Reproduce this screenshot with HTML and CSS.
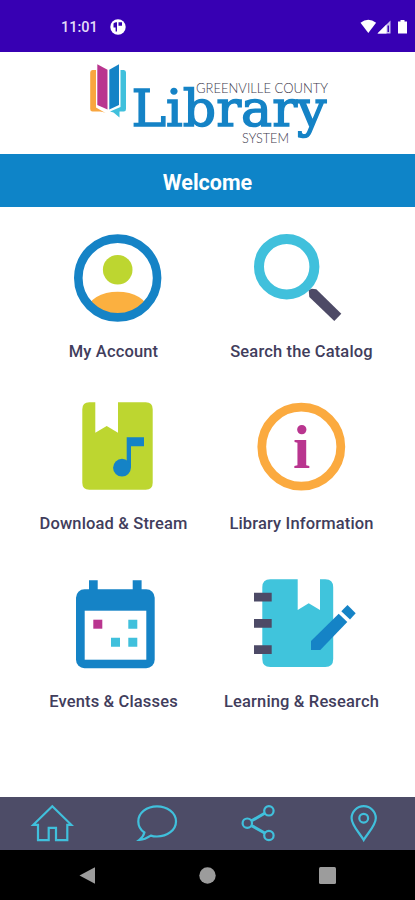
FILE: index.html
```html
<!DOCTYPE html>
<html lang="en">
<head>
  <meta charset="UTF-8">
  <title>Greenville County Library System</title>
  <link rel="stylesheet" href="styles.css">
</head>
<body>
  <div class="status-bar">
    <span class="time">11:01</span>
    <svg class="app-dot" width="16" height="16" viewBox="0 0 16 16">
      <circle cx="8" cy="8" r="7.7" fill="#fff"/>
      <path d="M3.500 4.500Q5 3 7 3.200V12.500H5.600V8.500H3.500zM8.500 3.300h3.500v3.500h-3.500z" fill="#3700b3"/>
    </svg>
    <svg class="signals" width="48" height="16" viewBox="0 0 48 16">
      <path d="M0.500 3.800Q8.300-2.200 16.100 3.800L8.300 14z" fill="#fff"/>
      <path d="M17.500 14.500L30.500 1.500V14.500z" fill="#c9bdf0"/>
      <path d="M17.500 14.500L26.500 5.500V14.500z" fill="#fff"/>
      <path d="M27.500 6.500h1.500v6.500h-1.500z" fill="#3700b3"/>
      <path d="M38 2.500h2.500v-1.500h4v1.500h2.500v12h-9z" fill="#fff"/>
    </svg>
  </div>

  <header class="logo">
    <svg width="245" height="90" viewBox="0 0 245 90">
      <path d="M11 10H7.500Q5.200 10 5.200 12.500V49Q5.200 51.500 7.500 51.500H15Q18 51.500 20.500 53L11 47.500z" fill="#f9a63f"/>
      <path d="M12.300 4.300L22.500 9.800V49.500L12.300 45z" fill="#b9358f"/>
      <path d="M24.300 9.800L34 4.300V45L24.300 49.500z" fill="#1583c6"/>
      <path d="M35.500 10H38.800Q41 10 41 12.500V49Q41 51.500 38.800 51.500H34.500V57.500L28.500 52.500L25 51.500L35.500 47z" fill="#40c0dc"/>
      <text class="logo-name" x="46.500" y="66" textLength="195" lengthAdjust="spacingAndGlyphs">Library</text>
      <text class="logo-small" x="111" y="33" textLength="132" lengthAdjust="spacingAndGlyphs">GREENVILLE COUNTY</text>
      <text class="logo-small" x="157" y="82.500" textLength="47" lengthAdjust="spacingAndGlyphs">SYSTEM</text>
    </svg>
  </header>

  <h1>Welcome</h1>

  <main class="menu">
    <div class="item">
      <svg width="188" height="100" viewBox="0 0 188 100">
        <clipPath id="face"><circle cx="98.700" cy="50" r="36"/></clipPath>
        <circle cx="98.700" cy="41.700" r="14.800" fill="#bdd630"/>
        <ellipse cx="98.700" cy="82" rx="30" ry="18.300" fill="#fbb040" clip-path="url(#face)"/>
        <circle cx="98.700" cy="50" r="39.400" fill="none" stroke="#1583c6" stroke-width="8.600"/>
      </svg>
      <span class="label">My Account</span>
    </div>

    <div class="item">
      <svg width="188" height="100" viewBox="0 0 188 100">
        <path d="M101.700 62L104.700 60.700L109.300 61.300L134.300 85.700L127.300 93L102.300 69z" fill="#4d4a66"/>
        <circle cx="79.700" cy="38.700" r="27.700" fill="none" stroke="#40c0dc" stroke-width="10"/>
      </svg>
      <span class="label">Search the Catalog</span>
    </div>

    <div class="item">
      <svg width="188" height="100" viewBox="0 0 188 100">
        <path d="M70.300 2.200H76.300V32.700L87.700 26L99 32.700V2.200H126.700Q133.700 2.200 133.700 9.200V82.800Q133.700 89.800 126.700 89.800H70.300Q63.300 89.800 63.300 82.800V9.200Q63.300 2.200 70.300 2.200z" fill="#bdd630"/>
        <path d="M107.700 37.300H125V46.300H112V67.700H107.700z" fill="#1583c6"/>
        <circle cx="103" cy="67.700" r="8.900" fill="#1583c6"/>
      </svg>
      <span class="label">Download &amp; Stream</span>
    </div>

    <div class="item">
      <svg width="188" height="100" viewBox="0 0 188 100">
        <circle cx="94.300" cy="46.700" r="39.500" fill="none" stroke="#fbaa3f" stroke-width="8.800"/>
        <text class="info" x="94.500" y="68" text-anchor="middle">i</text>
      </svg>
      <span class="label">Library Information</span>
    </div>

    <div class="item">
      <svg width="188" height="100" viewBox="0 0 188 100">
        <path d="M70 2.300h8.700v12h-8.700zM113.700 2.300h8.900v12h-8.900z" fill="#1583c6"/>
        <rect x="57" y="11.300" width="78.700" height="79" rx="8.500" fill="#1583c6"/>
        <rect x="65.700" y="32.700" width="61.600" height="49" fill="#fff"/>
        <rect x="74.300" y="41.700" width="9" height="9" fill="#b9358f"/>
        <path d="M109.300 41.700h9v9h-9zM92 59.700h9v9h-9zM109.300 59.700h9v9h-9z" fill="#40c0dc"/>
      </svg>
      <span class="label">Events &amp; Classes</span>
    </div>

    <div class="item">
      <svg width="188" height="100" viewBox="0 0 188 100">
        <path d="M63.300 1.300H90.700V32L101.700 25.300L113 32V1.300H118.300Q126.200 1.300 126.200 9.300V81Q126.200 89 118.300 89H63.300Q55.300 89 55.300 81V9.300Q55.300 1.300 63.300 1.300z" fill="#40c4dc"/>
        <path d="M47 14.700h17.700v8.800h-17.700zM47 41h17.700v8.800h-17.700zM47 67.300h17.700v8.800h-17.700z" fill="#4d4a66"/>
        <path d="M104 63L131.700 35.700L140.300 44L113.300 72H104z" fill="#1583c6"/>
        <path d="M134.300 33.300L140.500 27L148.700 35.300L143 41.500z" fill="#1583c6"/>
      </svg>
      <span class="label">Learning &amp; Research</span>
    </div>
  </main>

  <nav class="tabs">
    <svg width="44" height="40" viewBox="0 0 44 40">
      <path d="M22.300 2.300L41.300 20.800H37.300V36.200H26V23.800H18.700V36.200H8V20.800H3.300z"/>
    </svg>
    <svg width="44" height="40" viewBox="0 0 44 40">
      <path d="M10.400 28.500C6.500 25.800 4.300 21.800 4.300 17.400C4.300 8.900 12.700 2.300 23 2.300S42 8.900 42 17.400S33.300 32.500 23 32.500Q19.500 32.500 16.800 31.600Q11 35.500 5.400 35.800Q9.500 32.500 10.400 28.500z"/>
    </svg>
    <svg width="44" height="40" viewBox="0 0 44 40">
      <path class="thick" d="M14.600 16.800L27.700 9.300M14.600 21.600L27.700 29"/>
      <circle cx="31.900" cy="6.800" r="4.700"/>
      <circle cx="10.300" cy="19.200" r="4.700"/>
      <circle cx="31.900" cy="31.500" r="4.700"/>
    </svg>
    <svg width="44" height="40" viewBox="0 0 44 40">
      <path d="M22.700 36C19 29.500 10.600 21.500 10.600 14.200A12.100 12 0 0 1 34.800 14.200C34.800 21.500 26.400 29.500 22.700 36z"/>
      <circle cx="22.700" cy="14.200" r="4.400"/>
    </svg>
  </nav>

  <div class="system-nav">
    <svg width="17" height="17" viewBox="0 0 17 17"><path d="M0.500 8.500L16 0.300V16.700z"/></svg>
    <svg width="17" height="17" viewBox="0 0 17 17"><circle cx="8.500" cy="8.500" r="8.200"/></svg>
    <svg width="17" height="17" viewBox="0 0 17 17"><rect width="17" height="17" rx="1.500"/></svg>
  </div>
</body>
</html>
```

FILE: styles.css
```css
body {
  margin: 0;
  height: 900px;
  display: flex;
  flex-direction: column;
  background-color: #fff;
  font-family: Roboto, "Liberation Sans", sans-serif;
  overflow: hidden;
}

svg {
  display: block;
  overflow: visible;
}

.status-bar {
  height: 52px;
  box-sizing: border-box;
  padding: 2px 7px 0 61px;
  display: flex;
  align-items: center;
  background-color: #3700b3;
}

.time {
  width: 49px;
  font-size: 14.500px;
  font-weight: 500;
  color: #e4dcf8;
}

.signals {
  margin-left: auto;
}

.logo {
  height: 102px;
  box-sizing: border-box;
  padding: 8px 0 0 85px;
}

.logo-name {
  font-family: "DejaVu Serif", serif;
  font-size: 51px;
  fill: #1583c6;
  stroke: #1583c6;
  stroke-width: 1.500;
}

.logo-small {
  font-family: Lato, sans-serif;
  font-size: 13px;
  font-weight: 300;
  fill: #3d3a4c;
}

h1 {
  margin: 0;
  height: 53px;
  line-height: 57px;
  font-size: 21.500px;
  font-weight: bold;
  text-align: center;
  color: #fff;
  background-color: #0e84c8;
}

.menu {
  flex: 1;
  padding: 21px 0 0 19px;
  display: grid;
  grid-template-columns: 188px 188px;
  grid-template-rows: 172px 178px 136px;
}

.label {
  display: block;
  margin-top: 12px;
  padding-left: 1px;
  line-height: 24px;
  font-size: 16.500px;
  font-weight: 500;
  letter-spacing: 0.150px;
  text-align: center;
  color: #413d5c;
}

.info {
  font-family: "Liberation Serif", serif;
  font-size: 62px;
  font-weight: bold;
  fill: #b9358f;
}

.tabs {
  height: 53px;
  display: flex;
  align-items: center;
  justify-content: space-around;
  background-color: #4d4c67;
}

.tabs svg {
  fill: none;
  stroke: #40c0dc;
  stroke-width: 2.200;
}

.tabs .thick {
  stroke-width: 3;
}

.system-nav {
  height: 50px;
  box-sizing: border-box;
  padding: 0 79px;
  display: flex;
  align-items: center;
  justify-content: space-between;
  background-color: #000;
}

.system-nav svg {
  fill: #9c9c9c;
}
```
